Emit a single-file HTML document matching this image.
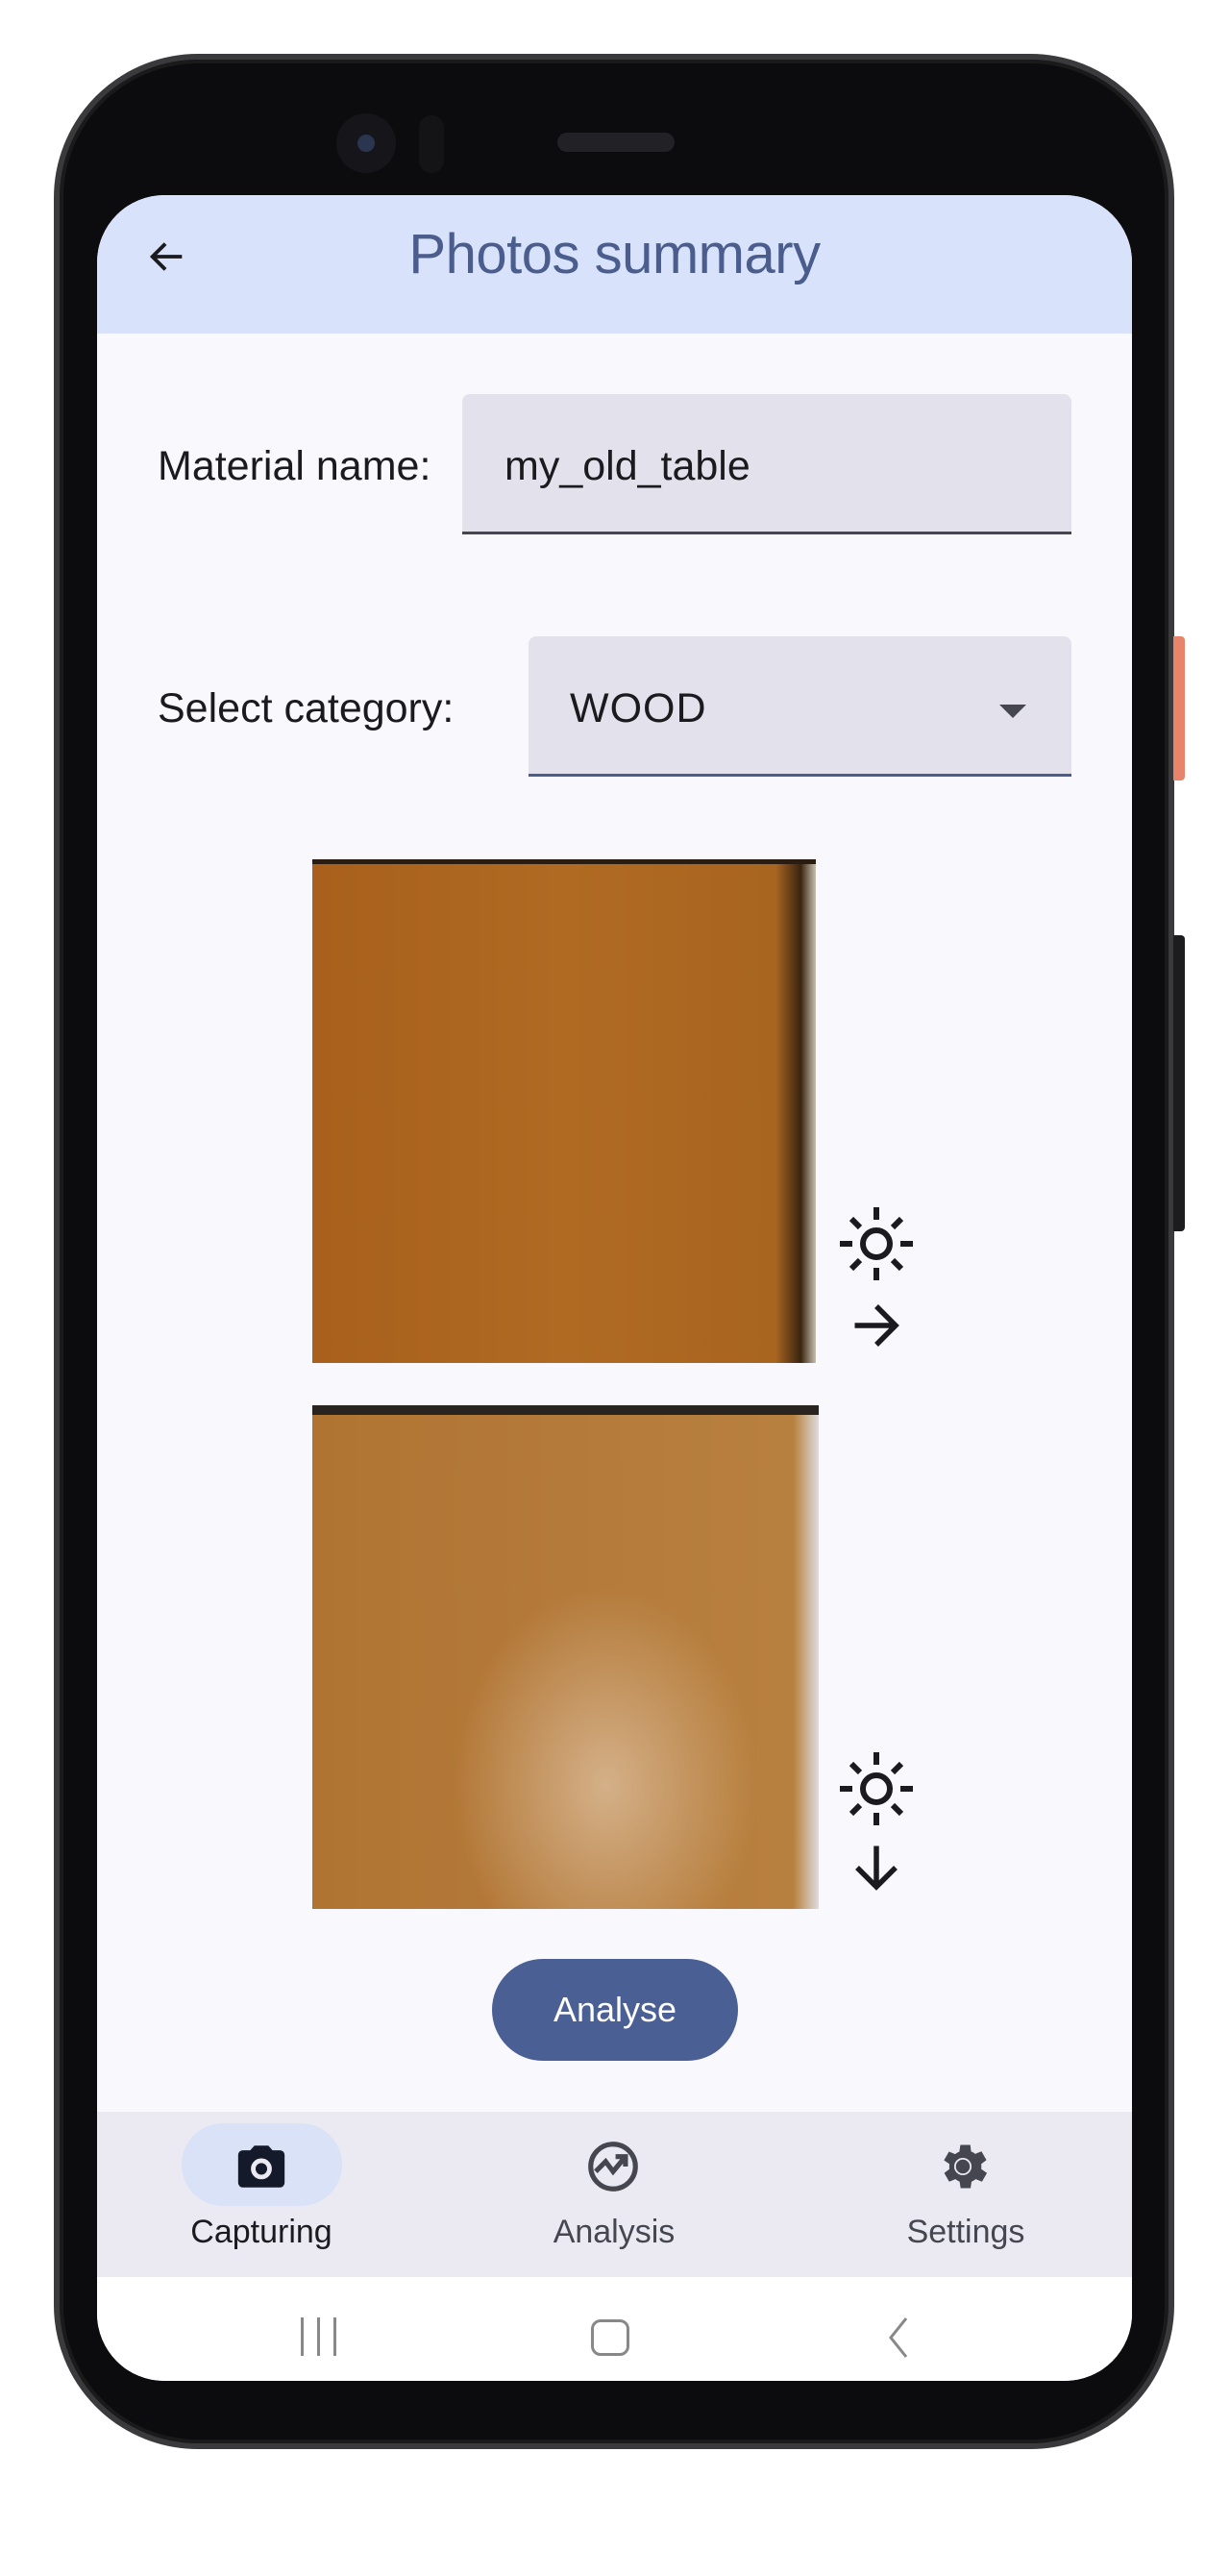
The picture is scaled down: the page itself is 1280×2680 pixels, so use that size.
<!DOCTYPE html>
<html><head><meta charset="utf-8"><style>
*{margin:0;padding:0;box-sizing:border-box}
body{width:1280px;height:2680px;background:#fff;position:relative;overflow:hidden;font-family:"Liberation Sans",sans-serif}
.abs{position:absolute}
.phone{left:56px;top:56px;width:1166px;height:2492px;border-radius:150px;background:#0c0c0e;border:6px solid #3a3a3c;box-shadow:inset 0 0 0 4px #1a1a1a}
.screen{left:101px;top:203px;width:1077px;height:2274px;border-radius:70px;background:#f8f8fd;overflow:hidden}
.header{left:0;top:0;width:1077px;height:144px;background:#d8e2fb}
.title{left:0;width:1077px;top:28px;text-align:center;font-size:58px;color:#4a5d8c;letter-spacing:-0.5px}
.lbl{font-size:43px;color:#1b1b1f}
.field{background:#e3e2ec;border-radius:8px 8px 0 0;border-bottom:3px solid #45464f}
.nav{left:0;top:1994px;width:1077px;height:172px;background:#ebeaf3}
.navl{font-size:34px;color:#45464f;text-align:center;width:260px}
.sys{left:0;top:2166px;width:1077px;height:108px;background:#fff}
</style></head><body>
<div class="abs phone"></div>
<div class="abs" style="left:1221px;top:662px;width:12px;height:150px;background:#e8846a;border-radius:0 4px 4px 0"></div>
<div class="abs" style="left:1221px;top:973px;width:12px;height:308px;background:#1c1c1e;border-radius:0 4px 4px 0"></div>
<div class="abs" style="left:350px;top:118px;width:62px;height:62px;border-radius:50%;background:#16161a"></div>
<div class="abs" style="left:372px;top:140px;width:18px;height:18px;border-radius:50%;background:#2a3550"></div>
<div class="abs" style="left:436px;top:120px;width:26px;height:60px;border-radius:13px;background:#141417"></div>
<div class="abs" style="left:580px;top:138px;width:122px;height:20px;border-radius:10px;background:#222226"></div>
<div class="abs screen">
 <div class="abs header">
  <svg class="abs" style="left:50px;top:41px" width="46" height="46" viewBox="0 0 24 24"><path d="M20 12H4M11 5l-7 7 7 7" stroke="#1b1b1f" stroke-width="2" fill="none"/></svg>
  <div class="abs title">Photos summary</div>
 </div>
 <div class="abs lbl" style="left:63px;top:258px">Material name:</div>
 <div class="abs field" style="left:380px;top:207px;width:634px;height:146px"></div>
 <div class="abs lbl" style="left:424px;top:258px">my_old_table</div>
 <div class="abs lbl" style="left:63px;top:510px">Select category:</div>
 <div class="abs field" style="left:449px;top:459px;width:565px;height:146px;border-bottom-color:#4a5d8c"></div>
 <div class="abs lbl" style="left:492px;top:510px;letter-spacing:1px">WOOD</div>
 <div class="abs" style="left:939px;top:530px;width:0;height:0;border-left:14px solid transparent;border-right:14px solid transparent;border-top:14px solid #45464f"></div>
 <div class="abs" style="left:224px;top:691px;width:524px;height:524px;background:linear-gradient(90deg,#a8601c 0%,#b06a22 50%,#a86520 92%,#3a2410 97%,#c8c0b0 100%);border-top:5px solid #2a1c10"></div>
 <div class="abs" style="left:224px;top:1259px;width:527px;height:524px;background:radial-gradient(ellipse 30% 40% at 58% 75%,#d4b088 0%,rgba(200,150,90,0) 100%),linear-gradient(90deg,#b07432 0%,#b47a3a 50%,#b8803e 95%,#ddd 100%);border-top:10px solid #2a2420"></div>
 <svg class="abs" style="left:770px;top:1050px" width="82" height="82" viewBox="-41 -41 82 82"><circle r="14" stroke="#1b1b1f" stroke-width="6" fill="none"/><g stroke="#1b1b1f" stroke-width="6"><path d="M0-38v13M0 25v13M-38 0h13M25 0h13M-26-26l9 9M17 17l9 9M26-26l-9 9M-17 17l-9 9"/></g></svg>
 <svg class="abs" style="left:781px;top:1146px" width="60" height="60" viewBox="0 0 24 24"><path d="M3 12h17M12 4l8 8-8 8" stroke="#1b1b1f" stroke-width="2.2" fill="none"/></svg>
 <svg class="abs" style="left:770px;top:1617px" width="82" height="82" viewBox="-41 -41 82 82"><circle r="14" stroke="#1b1b1f" stroke-width="6" fill="none"/><g stroke="#1b1b1f" stroke-width="6"><path d="M0-38v13M0 25v13M-38 0h13M25 0h13M-26-26l9 9M17 17l9 9M26-26l-9 9M-17 17l-9 9"/></g></svg>
 <svg class="abs" style="left:781px;top:1710px" width="60" height="60" viewBox="0 0 24 24"><path d="M12 3v17M4 12l8 8 8-8" stroke="#1b1b1f" stroke-width="2.2" fill="none"/></svg>
 <div class="abs" style="left:411px;top:1835px;width:256px;height:106px;border-radius:53px;background:#4a5f94;color:#fff;font-size:36px;text-align:center;line-height:106px">Analyse</div>
 <div class="abs nav">
  <div class="abs" style="left:88px;top:12px;width:167px;height:86px;border-radius:43px;background:#dae2f8"></div>
  <svg class="abs" style="left:142px;top:28px" width="58" height="58" viewBox="0 0 24 24"><path d="M9 3L7.2 5H4a2 2 0 0 0-2 2v12a2 2 0 0 0 2 2h16a2 2 0 0 0 2-2V7a2 2 0 0 0-2-2h-3.2L15 3z" fill="#151a2a"/><circle cx="12" cy="13" r="3.5" fill="none" stroke="#ebeaf3" stroke-width="2"/></svg>
  <svg class="abs" style="left:506px;top:26px" width="62" height="62" viewBox="0 0 24 24"><circle cx="12" cy="12" r="9" fill="none" stroke="#45464f" stroke-width="2"/><path d="M5 14l4-4 3 4 5-6M13 8h4v4" fill="none" stroke="#45464f" stroke-width="2"/></svg>
  <svg class="abs" style="left:870px;top:26px" width="62" height="62" viewBox="0 0 24 24"><path fill="#45464f" d="M19.4 13a7.6 7.6 0 0 0 0-2l2.1-1.6-2-3.5-2.5 1a7.3 7.3 0 0 0-1.7-1L15 3.3h-4L10.6 6a7.3 7.3 0 0 0-1.7 1l-2.5-1-2 3.5L6.6 11a7.6 7.6 0 0 0 0 2l-2.1 1.6 2 3.5 2.5-1a7.3 7.3 0 0 0 1.7 1l.4 2.6h4l.4-2.6a7.3 7.3 0 0 0 1.7-1l2.5 1 2-3.5zM12 15.5A3.5 3.5 0 1 1 12 8.5a3.5 3.5 0 0 1 0 7z"/><circle cx="12" cy="12" r="2.8" fill="#45464f"/></svg>
  <div class="abs navl" style="left:41px;top:106px;color:#1b1b1f">Capturing</div>
  <div class="abs navl" style="left:408px;top:106px">Analysis</div>
  <div class="abs navl" style="left:774px;top:106px">Settings</div>
 </div>
 <div class="abs sys">
  <div class="abs" style="left:212px;top:42px;width:3px;height:40px;background:#888"></div>
  <div class="abs" style="left:229px;top:42px;width:3px;height:40px;background:#888"></div>
  <div class="abs" style="left:246px;top:42px;width:3px;height:40px;background:#888"></div>
  <div class="abs" style="left:514px;top:44px;width:40px;height:38px;border:3px solid #888;border-radius:10px"></div>
  <svg class="abs" style="left:818px;top:40px" width="30" height="46" viewBox="0 0 30 46"><path d="M24 3L8 23l16 20" stroke="#888" stroke-width="3" fill="none"/></svg>
 </div>
</div>
</body></html>
